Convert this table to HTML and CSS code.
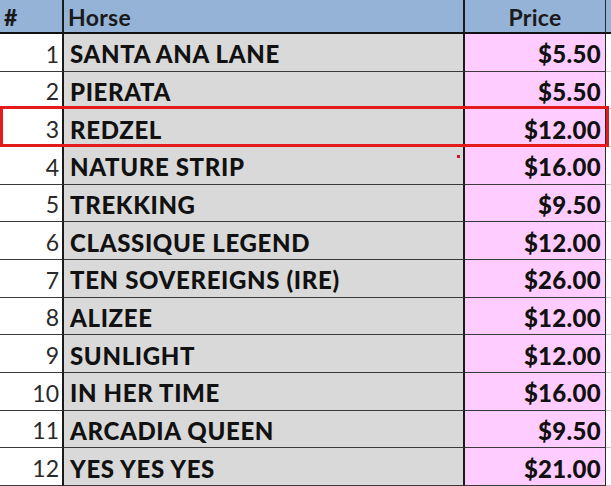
FILE: index.html
```html
<!DOCTYPE html>
<html>
<head>
<meta charset="utf-8">
<link rel="stylesheet" href="styles.css">
</head>
<body>
<div class="sheet">
  <div class="row head">
    <div class="cell num">#</div>
    <div class="cell horse">Horse</div>
    <div class="cell price">Price</div>
    <div class="cell extra"></div>
  </div>
  <div class="row"><div class="cell num">1</div><div class="cell horse">SANTA ANA LANE</div><div class="cell price">$5.50</div><div class="cell extra"></div></div>
  <div class="row"><div class="cell num">2</div><div class="cell horse">PIERATA</div><div class="cell price">$5.50</div><div class="cell extra"></div></div>
  <div class="row selected"><div class="cell num">3</div><div class="cell horse">REDZEL</div><div class="cell price">$12.00</div><div class="cell extra"></div></div>
  <div class="row"><div class="cell num">4</div><div class="cell horse">NATURE STRIP<span class="dot"></span></div><div class="cell price">$16.00</div><div class="cell extra"></div></div>
  <div class="row"><div class="cell num">5</div><div class="cell horse">TREKKING</div><div class="cell price">$9.50</div><div class="cell extra"></div></div>
  <div class="row"><div class="cell num">6</div><div class="cell horse">CLASSIQUE LEGEND</div><div class="cell price">$12.00</div><div class="cell extra"></div></div>
  <div class="row"><div class="cell num">7</div><div class="cell horse">TEN SOVEREIGNS (IRE)</div><div class="cell price">$26.00</div><div class="cell extra"></div></div>
  <div class="row"><div class="cell num">8</div><div class="cell horse">ALIZEE</div><div class="cell price">$12.00</div><div class="cell extra"></div></div>
  <div class="row"><div class="cell num">9</div><div class="cell horse">SUNLIGHT</div><div class="cell price">$12.00</div><div class="cell extra"></div></div>
  <div class="row"><div class="cell num">10</div><div class="cell horse">IN HER TIME</div><div class="cell price">$16.00</div><div class="cell extra"></div></div>
  <div class="row"><div class="cell num">11</div><div class="cell horse">ARCADIA QUEEN</div><div class="cell price">$9.50</div><div class="cell extra"></div></div>
  <div class="row"><div class="cell num">12</div><div class="cell horse">YES YES YES</div><div class="cell price">$21.00</div><div class="cell extra"></div></div>
</div>
</body>
</html>
```
FILE: styles.css
```css
html, body {
  margin: 0;
  padding: 0;
  background: #ffffff;
}
.sheet {
  width: 611px;
  height: 486px;
  overflow: hidden;
  display: grid;
  grid-template-rows: 34px repeat(12, 1fr);
  font-family: "Lato", "Liberation Sans", sans-serif;
  color: #111;
}
.row {
  display: grid;
  grid-template-columns: 64px 401px 141px 5px;
  position: relative;
}
.cell {
  display: flex;
  align-items: center;
  padding-top: 3px;
  border-bottom: 1px solid #3a3a3a;
  box-sizing: border-box;
  white-space: nowrap;
  overflow: hidden;
}
.num {
  background: #ffffff;
  justify-content: flex-end;
  padding-right: 3px;
  font-size: 23px;
  color: #2a2a2a;
  border-right: 2px solid #1a1a1a;
}
.horse {
  background: #d9d9d9;
  padding-left: 6px;
  font-size: 24px;
  font-weight: 900;
  letter-spacing: 0.65px;
  border-right: 2px solid #1a1a1a;
  position: relative;
}
.price {
  background: #ffccff;
  justify-content: flex-end;
  padding-right: 4px;
  font-size: 24px;
  font-weight: 900;
  letter-spacing: 0.3px;
  border-right: 1px solid #2a2a2a;
}
.extra {
  background: #ffffff;
  border-bottom: 1px solid #c8c8c8;
}
.head .cell {
  background: #95b3d7;
  border-bottom: 2px solid #111;
  font-size: 23px;
  font-weight: 700;
  letter-spacing: 0.3px;
  color: #1a1a1a;
  padding-top: 2px;
}
.head .num {
  justify-content: flex-start;
  padding-left: 4px;
  font-weight: 900;
}
.head .horse {
  padding-left: 4px;
}
.head .price {
  justify-content: center;
  padding-right: 0;
}
.selected::after {
  content: "";
  position: absolute;
  left: 0;
  top: -3px;
  width: 609px;
  bottom: 0;
  border: 3px solid #e41b1b;
  box-sizing: border-box;
  pointer-events: none;
}
.dot {
  position: absolute;
  right: 3px;
  top: 8px;
  width: 3px;
  height: 3px;
  background: #d01030;
}
```
